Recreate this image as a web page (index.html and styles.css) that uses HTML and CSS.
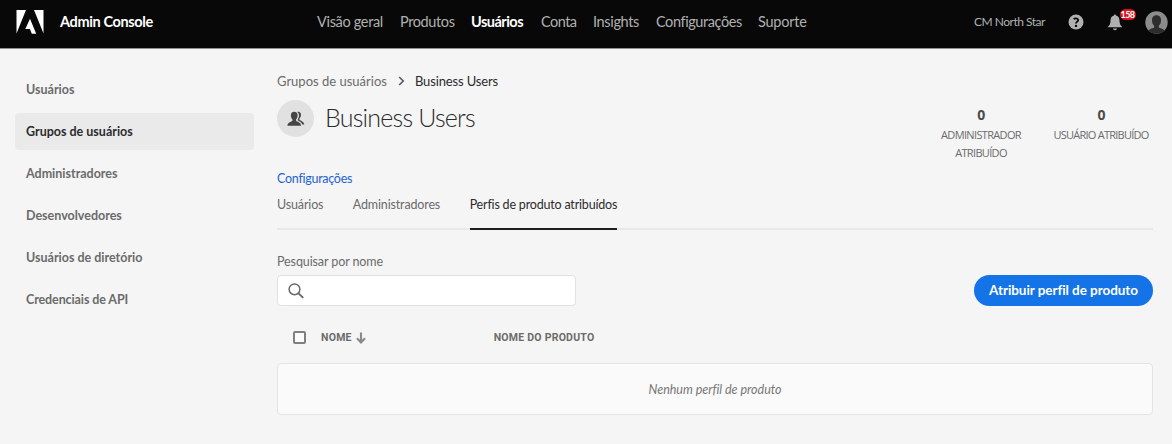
FILE: index.html
```html
<!DOCTYPE html>
<html lang="pt">
<head>
<meta charset="utf-8">
<title>Admin Console</title>
<link rel="stylesheet" href="styles.css">
</head>
<body>
<header class="topbar">
  <svg class="logo" width="28" height="24" viewBox="0 0 28 24"><path fill="#fff" d="M.5 0H10L.5 23.600zM18 0h9.500v23.600zM14 8.800l6.200 15h-4.400l-1.900-4.900H9.300z"/></svg>
  <span class="brand">Admin Console</span>
  <nav class="nav">
    <a class="n-visao">Visão geral</a><a class="n-produtos">Produtos</a><a class="n-usuarios active">Usuários</a><a class="n-conta">Conta</a><a class="n-insights">Insights</a><a class="n-config">Configurações</a><a class="n-suporte">Suporte</a>
  </nav>
  <span class="org">CM North Star</span>
  <svg class="help" width="16" height="16" viewBox="0 0 16 16"><circle cx="8" cy="8" r="7.500" fill="#b0b0b0"/><path d="M5.700 5.200C6.500 4.100 10 3.700 10.200 6c.1 1.500-2.200 1.700-2.200 3.500" fill="none" stroke="#080808" stroke-width="1.800"/><circle cx="8" cy="11.900" r="1.200" fill="#080808"/></svg>
  <div class="bell">
    <svg width="14" height="17" viewBox="0 0 14 17"><path fill="#b0b0b0" d="M6 1.500C6 0 8 0 8 1.500c2.600.5 3.400 2.600 3.500 5.200.1 3.100.8 4.500 2.300 5.500v1H.2v-1c1.500-1 2.200-2.400 2.300-5.500C2.600 4.100 3.400 2 6 1.500zM5 14.500h4c-.3 2.200-3.700 2.200-4 0z"/></svg>
    <span class="badge">158</span>
  </div>
  <svg class="avatar" width="23" height="23" viewBox="0 0 23 23"><defs><clipPath id="disc"><circle cx="11.500" cy="11.500" r="11.200"/></clipPath></defs><g clip-path="url(#disc)"><path fill="#8c8c8c" d="M0 0h23v23H0z"/><path fill="#2d2d2d" d="M11.500 4.200c3 0 4.600 2.200 4.500 5.200-.1 2.400-.9 4.200-2.200 5.300v1.500c.8 1.200 4.700 1.200 6 3.800L17 23H6l-2.800-3c1.300-2.600 5.200-2.600 6-3.800v-1.500C7.900 13.600 7.100 11.800 7 9.400c-.1-3 1.500-5.200 4.500-5.200z"/></g></svg>
</header>
<div class="page">
  <aside class="sidebar">
    <a>Usuários</a>
    <a class="selected">Grupos de usuários</a>
    <a>Administradores</a>
    <a>Desenvolvedores</a>
    <a>Usuários de diretório</a>
    <a class="s-api">Credenciais de API</a>
  </aside>
  <main class="main">
    <div class="crumbs"><span>Grupos de usuários</span><svg width="7" height="10" viewBox="0 0 7 10"><path d="M1.200 1l4 4-4 4" fill="none" stroke="#5c5c5c" stroke-width="1.700"/></svg><span class="current">Business Users</span></div>
    <div class="heading">
      <div class="identity">
        <div class="group-icon"><svg width="18" height="16" viewBox="0 0 18 16"><path fill="#464646" d="M7.200.8c2.300 0 3.500 1.500 3.400 3.700 0 1.700-.7 3.100-1.500 3.800v1.600c1.400.7 4.900 1.400 5 4.900H.4c.1-3.500 3.600-4.200 5-4.900V8.300C4.500 7.600 3.900 6.200 3.900 4.500 3.800 2.300 5 .8 7.200.8z"/><path fill="#464646" d="M10.300.9C12.700.3 14 1.800 14 3.800c0 1.800-.7 3-1.500 3.700v1.400c1.300.8 4.500 1.500 4.800 4.600h-2c-.8-2.300-2.500-3.200-4.500-4V8.200c.7-1 1.200-2.200 1.200-3.900 0-1.400-.6-2.600-1.700-3.400z"/></svg></div>
        <h1>Business Users</h1>
      </div>
      <div class="stats">
        <div class="stat admins"><b>0</b><span>ADMINISTRADOR ATRIBUÍDO</span></div>
        <div class="stat users"><b>0</b><span>USUÁRIO ATRIBUÍDO</span></div>
      </div>
    </div>
    <a class="settings">Configurações</a>
    <div class="tabs"><a>Usuários</a><a>Administradores</a><a class="active">Perfis de produto atribuídos</a></div>
    <div class="label">Pesquisar por nome</div>
    <div class="tools">
      <div class="search"><svg width="17" height="16" viewBox="0 0 17 16"><circle cx="6.500" cy="6.300" r="5.400" fill="none" stroke="#6b6b6b" stroke-width="1.500"/><path d="M10.400 10.200l4.800 4.700" stroke="#6b6b6b" stroke-width="1.900"/></svg></div>
      <button class="assign">Atribuir perfil de produto</button>
    </div>
    <div class="thead"><i class="check"></i><span class="col-name">NOME</span><svg width="10" height="12" viewBox="0 0 10 12"><path d="M5 .5v9.500M1 6.200l4 4.200 4-4.200" fill="none" stroke="#8a8a8a" stroke-width="2.100"/></svg><span class="col-product">NOME DO PRODUTO</span></div>
    <div class="empty">Nenhum perfil de produto</div>
  </main>
</div>
</body>
</html>
```
FILE: styles.css
```css
* { box-sizing: border-box; }
body { margin: 0; height: 444px; overflow: hidden; background: #f5f5f5; color: #6b6b6b; font-family: Lato, sans-serif; font-size: 12.5px; }
.topbar { height: 49px; display: flex; align-items: center; background: #080808; border-bottom: 1px solid #909090; padding: 0 4px 5px 16px; white-space: nowrap; }
.logo { margin-top: 1px; }
.brand { width: 257px; margin-left: 16px; color: #fff; font-size: 14.5px; font-weight: 700; letter-spacing: -0.37px; }
.nav { display: flex; width: 657px; font-size: 14.5px; color: #b1b1b1; }
.nav a { flex: none; }
.n-visao { width: 83px; letter-spacing: -0.33px; }
.n-produtos { width: 71px; letter-spacing: -0.39px; }
.nav .active { width: 70px; letter-spacing: -0.52px; font-weight: 700; color: #fff; }
.n-conta { width: 52px; letter-spacing: -0.53px; }
.n-insights { width: 63px; letter-spacing: -0.35px; }
.n-config { width: 102px; letter-spacing: -0.42px; }
.n-suporte { letter-spacing: -0.22px; }
.org { flex: none; width: 93.5px; font-size: 12px; letter-spacing: -0.49px; color: #b1b1b1; }
.help { flex: none; margin-top: 1px; }
.bell { position: relative; flex: none; width: 14px; height: 17px; margin-left: 24px; margin-top: 1px; }
.bell svg { display: block; }
.badge { position: absolute; left: 12px; top: -5px; width: 16px; height: 11px; border-radius: 6px; background: #d7141e; color: #fff; font: 700 9px/11px Lato, sans-serif; letter-spacing: -0.5px; text-align: center; }
.avatar { flex: none; margin-left: 23px; margin-top: 1px; }
.page { display: flex; }
.sidebar { width: 277px; padding: 22px 23px 0 15px; display: flex; flex-direction: column; gap: 5px; }
.sidebar a { height: 37px; padding-left: 11px; line-height: 37px; font-weight: 700; border-radius: 4px; }
.sidebar .selected { background: #eaeaea; color: #2c2c2c; }
.s-api { letter-spacing: -0.1px; }
.main { width: 876px; padding-top: 23px; }
.crumbs { display: flex; align-items: center; height: 18px; font-size: 13px; }
.crumbs svg { margin: 0 10px 0 11px; }
.current { color: #2c2c2c; letter-spacing: -0.13px; }
.heading { display: flex; justify-content: space-between; height: 80px; }
.identity { display: flex; align-items: center; height: 37px; margin-top: 10px; }
.group-icon { width: 37px; height: 37px; border-radius: 50%; background: #e1e1e1; display: flex; align-items: center; justify-content: center; }
h1 { margin: -2px 0 0 11px; font-size: 25px; font-weight: 300; letter-spacing: -0.78px; line-height: 37px; color: #2c2c2c; }
.stats { display: flex; padding-top: 15px; text-align: center; font: 11px/18px "Open Sans", sans-serif; }
.stat b { display: block; height: 21px; font-size: 14px; line-height: 20px; color: #4b4b4b; }
.stat span { display: block; }
.admins { width: 84px; letter-spacing: -0.66px; }
.users { width: 100px; margin: 0 2px 0 28px; letter-spacing: -0.76px; white-space: nowrap; }
.settings { display: block; height: 18px; line-height: 18px; letter-spacing: -0.27px; color: #1e62d0; }
.tabs { display: flex; height: 42px; border-bottom: 2px solid #e8e8e8; line-height: 34px; letter-spacing: -0.15px; }
.tabs a { height: 42px; margin-right: 29.500px; }
.tabs .active { color: #2c2c2c; letter-spacing: -0.19px; border-bottom: 2px solid #1e1e1e; }
.label { margin-top: 23px; height: 23px; line-height: 18px; letter-spacing: -0.1px; }
.tools { display: flex; justify-content: space-between; margin-top: -1px; }
.search { width: 299px; height: 31px; border: 1px solid #e1e1e1; border-radius: 4px; background: #fff; padding: 7px 0 0 10px; }
.assign { width: 179px; height: 31px; border: 0; border-radius: 16px; background: #1473e6; color: #fff; font: 700 13.5px Lato, sans-serif; letter-spacing: -0.06px; padding: 0 0 2px; }
.thead { display: flex; align-items: center; height: 57px; padding: 6px 0 0 16px; font: 700 10.5px Roboto, sans-serif; letter-spacing: 0.24px; }
.check { width: 13px; height: 13px; border: 2px solid #808080; border-radius: 2px; background: #fafafa; margin-right: 15px; }
.thead svg { margin-left: 4px; }
.col-product { margin-left: 128px; }
.empty { height: 52px; border: 1px solid #e4e4e4; border-radius: 4px; background: #fafafa; text-align: center; line-height: 51px; font-style: italic; color: #777; letter-spacing: -0.02px; }
```
